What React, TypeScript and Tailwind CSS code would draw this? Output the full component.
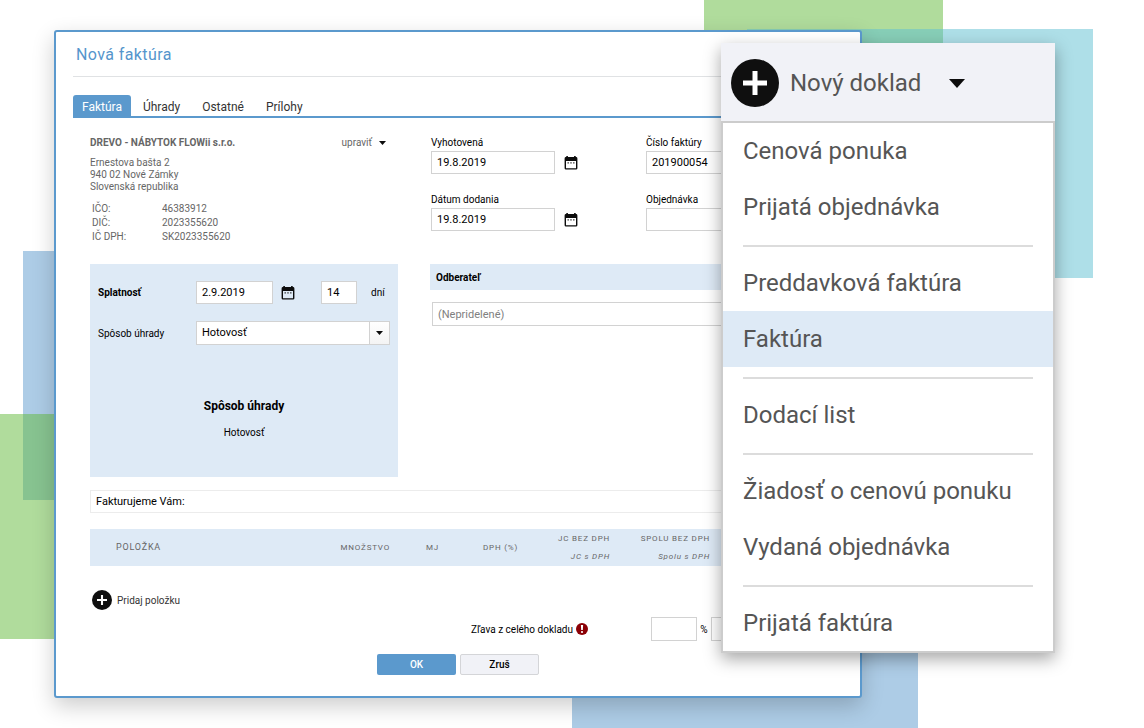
import { useState } from "react";

const tabs = ["Faktúra", "Úhrady", "Ostatné", "Prílohy"];

const sellerIds = [
  { label: "IČO:", value: "46383912" },
  { label: "DIČ:", value: "2023355620" },
  { label: "IČ DPH:", value: "SK2023355620" },
];

const menuGroups = [
  ["Cenová ponuka", "Prijatá objednávka"],
  ["Preddavková faktúra", "Faktúra"],
  ["Dodací list"],
  ["Žiadosť o cenovú ponuku", "Vydaná objednávka"],
  ["Prijatá faktúra"],
];

const inputClass = "block border border-[#d2d2d2] bg-white px-[5px] text-[11px] text-black outline-none";

function PlusIcon({ className }: { className: string }) {
  return (
    <svg viewBox="0 0 48 48" className={className} aria-hidden="true">
      <circle cx="24" cy="24" r="24" fill="#0f0f0f" />
      <path d="M24 12v24M12 24h24" stroke="#fff" strokeWidth="5" />
    </svg>
  );
}

function CalendarIcon() {
  return (
    <svg viewBox="0 0 14 14" className="h-3.5 w-3.5" aria-hidden="true">
      <path
        d="M2 1h10a1.400 1.400 0 0 1 1.400 1.400v9.800a1.400 1.400 0 0 1-1.400 1.400H2a1.400 1.400 0 0 1-1.400-1.400V2.400A1.400 1.400 0 0 1 2 1zM2 5v7.200h10V5z"
        fill="#0c0c0c"
        fillRule="evenodd"
      />
      <path d="M2.300 0h1.600v2H2.300zM10.100 0h1.600v2h-1.600z" fill="#0c0c0c" />
      <path d="M3.500 6.300h1.400v1.200H3.500zM6.300 6.300h1.400v1.200H6.300zM9.100 6.300h1.400v1.200H9.100z" fill="#333" />
    </svg>
  );
}

function Caret({ className }: { className: string }) {
  return (
    <svg viewBox="0 0 16 9" className={className} aria-hidden="true">
      <path d="M0 0h16L8 9z" fill="#0c0c0c" />
    </svg>
  );
}

function DateField({ id, label }: { id: string; label: string }) {
  return (
    <div>
      <label htmlFor={id} className="block text-[10px] leading-4">{label}</label>
      <div className="flex items-center gap-[9px]">
        <input id={id} type="text" defaultValue="19.8.2019" className={`${inputClass} h-[23px] w-[124px]`} />
        <button type="button" aria-label={`${label} – kalendár`}><CalendarIcon /></button>
      </div>
    </div>
  );
}

function Backdrop() {
  return (
    <div className="absolute inset-0 overflow-hidden" aria-hidden="true">
      <div className="absolute top-0 right-[201px] h-[140px] w-[239px] bg-[#61b939]/50" />
      <div className="absolute top-[29px] right-[51px] h-[249px] w-[346px] bg-[#5dc0d1]/50" />
      <div className="absolute top-[251px] left-[23px] h-[249px] w-[346px] bg-[#5b99cd]/50" />
      <div className="absolute top-[414px] left-0 h-[225px] w-[239px] bg-[#61b939]/50" />
      <div className="absolute top-[479px] right-[226px] h-[249px] w-[346px] bg-[#5b99cd]/50" />
    </div>
  );
}

function Seller() {
  return (
    <section className="text-[10px] text-[#666]">
      <div className="flex justify-between pr-3">
        <h2 className="leading-4 font-bold">DREVO - NÁBYTOK FLOWii s.r.o.</h2>
        <button type="button" className="flex items-center gap-[7px] leading-4">
          upraviť
          <Caret className="h-1 w-[7px]" />
        </button>
      </div>
      <address className="mt-1.5 leading-3 not-italic">
        Ernestova bašta 2<br />
        940 02 Nové Zámky<br />
        Slovenská republika
      </address>
      <dl className="mt-[9px] ml-0.5">
        {sellerIds.map((row) => (
          <div key={row.label} className="flex leading-3.5">
            <dt className="w-[70px]">{row.label}</dt>
            <dd>{row.value}</dd>
          </div>
        ))}
      </dl>
    </section>
  );
}

function Payment() {
  return (
    <section className="h-[213px] bg-[#deeaf6] px-2 pt-[17px] text-[10px]">
      <div className="flex items-center">
        <label htmlFor="due" className="w-[98px] font-bold">Splatnosť</label>
        <input id="due" type="text" defaultValue="2.9.2019" className={`${inputClass} h-[23px] w-[77px]`} />
        <button type="button" aria-label="Splatnosť – kalendár" className="ml-2"><CalendarIcon /></button>
        <input id="days" type="text" defaultValue="14" className={`${inputClass} ml-[26px] h-[23px] w-9`} />
        <label htmlFor="days" className="ml-3.5">dní</label>
      </div>
      <div className="mt-[17px] flex items-center">
        <label htmlFor="method" className="w-[98px]">Spôsob úhrady</label>
        <div className="relative">
          <select id="method" className={`${inputClass} h-6 w-[194px] appearance-none`}>
            <option>Hotovosť</option>
          </select>
          <span className="pointer-events-none absolute inset-y-0 right-0 flex w-[21px] items-center justify-center border border-[#d2d2d2] bg-linear-to-b from-white to-[#f4f4f4]">
            <Caret className="h-1 w-[7px]" />
          </span>
        </div>
      </div>
      <div className="mt-[53px] text-center">
        <h3 className="text-xs leading-4 font-bold">Spôsob úhrady</h3>
        <p className="mt-[11px] leading-4">Hotovosť</p>
      </div>
    </section>
  );
}

function InvoiceDialog() {
  const [active, setActive] = useState("Faktúra");

  return (
    <main className="relative mr-[282px] ml-[54px] rounded-[3px] border-2 border-[#5b99cd] bg-white px-[17px] pt-[11px] pb-[21px] text-black shadow-[0_8px_22px_rgba(0,0,0,0.2)]">
      <h1 className="border-b border-[#e0e2e4] pb-[9px] pl-[3px] text-base leading-6 tracking-wide text-[#5595cc]">Nová faktúra</h1>

      <div role="tablist" className="mt-[18px] flex border-b-2 border-[#5b99cd] text-xs">
        {tabs.map((tab) => (
          <button
            key={tab}
            type="button"
            role="tab"
            aria-selected={tab === active}
            onClick={() => setActive(tab)}
            className={tab === active
              ? "mr-0.5 h-[21px] rounded-t-[3px] bg-[#5b99cd] px-[9px] pt-0.5 text-white"
              : "mr-0.5 h-[21px] px-2.5 pt-0.5 text-[#333]"}
          >
            {tab}
          </button>
        ))}
      </div>

      <div className="px-[17px] pt-[17px]">
        <div className="grid grid-cols-[308px_1fr] gap-x-8 gap-y-5">
          <Seller />
          <div className="grid grid-cols-[215px_1fr] content-start gap-y-[18px] pl-px">
            <DateField id="issued" label="Vyhotovená" />
            <div>
              <label htmlFor="number" className="block text-[10px] leading-4">Číslo faktúry</label>
              <input id="number" type="text" defaultValue="201900054" className={`${inputClass} h-[23px] w-full`} />
            </div>
            <DateField id="delivered" label="Dátum dodania" />
            <div>
              <label htmlFor="order" className="block text-[10px] leading-4">Objednávka</label>
              <input id="order" type="text" className={`${inputClass} h-[23px] w-full`} />
            </div>
          </div>

          <Payment />
          <section>
            <h2 className="bg-[#deeaf6] px-1.5 pt-px text-[10px] leading-[25px] font-bold">
              <label htmlFor="customer">Odberateľ</label>
            </h2>
            <div className="mt-3 pl-0.5">
              <input
                id="customer"
                type="text"
                placeholder="(Nepridelené)"
                className={`${inputClass} h-6 w-full placeholder:text-[#808080]`}
              />
            </div>
          </section>
        </div>

        <input
          type="text"
          aria-label="Úvodný text"
          defaultValue="Fakturujeme Vám:"
          className="mt-[13px] block h-[23px] w-full border border-[#ececec] px-[5px] text-[11px] outline-none"
        />

        <table className="mt-4 w-full table-fixed bg-[#deeaf6] text-[8px] tracking-widest text-[#666]">
          <thead>
            <tr className="h-[37px] text-right *:font-normal">
              <th className="pl-[26px] text-left text-[9px]">POLOŽKA</th>
              <th className="w-[100px]">MNOŽSTVO</th>
              <th className="w-[49px]">MJ</th>
              <th className="w-[79px]">DPH (%)</th>
              <th className="w-[92px]">
                <span className="block leading-[18px]">JC BEZ DPH</span>
                <em className="block leading-[18px]">JC s DPH</em>
              </th>
              <th className="w-[100px]">
                <span className="block leading-[18px]">SPOLU BEZ DPH</span>
                <em className="block leading-[18px]">Spolu s DPH</em>
              </th>
              <td className="w-[116px]" />
            </tr>
          </thead>
        </table>

        <button type="button" className="mt-6 ml-0.5 flex items-center gap-[5px] text-[10px] text-[#333]">
          <PlusIcon className="h-5 w-5" />
          Pridaj položku
        </button>

        <div className="mt-[7px] flex items-center justify-end text-[10px]">
          <label htmlFor="discount">Zľava z celého dokladu</label>
          <svg viewBox="0 0 12 12" className="mr-[63px] ml-[3px] h-3 w-3" aria-hidden="true">
            <circle cx="6" cy="6" r="6" fill="#8b0006" />
            <path d="M4.900 2h2.200l-.3 5H5.200z" fill="#fff" />
            <circle cx="6" cy="9" r="1.100" fill="#fff" />
          </svg>
          <input id="discount" type="text" className={`${inputClass} h-6 w-[46px]`} />
          <span className="w-3.5 text-center">%</span>
          <input type="text" aria-label="Zľava v eurách" className={`${inputClass} h-6 w-[115px]`} />
        </div>
      </div>

      <div className="mt-[13px] flex justify-center gap-1 text-[10px] font-medium">
        <button type="button" className="h-[21px] w-[79px] rounded-xs bg-[#5b99cd] text-white">OK</button>
        <button type="button" className="h-[21px] w-[79px] rounded-xs border border-[#d4d5d8] bg-[#f1f2f7]">Zruš</button>
      </div>
    </main>
  );
}

function NewDocumentMenu() {
  return (
    <nav className="absolute top-[43px] right-[89px] w-[334px] text-2xl text-[#555] shadow-[0_6px_16px_rgba(0,0,0,0.35)]">
      <button type="button" aria-expanded="true" className="flex h-[78px] w-full items-center bg-[#f1f2f7] pt-0.5 pl-2.5">
        <PlusIcon className="h-12 w-12" />
        <span className="ml-[11px]">Nový doklad</span>
        <Caret className="ml-7 h-[9px] w-4" />
      </button>
      <div className="border-2 border-[#ccc] bg-white">
        {menuGroups.map((group, i) => (
          <ul key={i}>
            {i > 0 && <li role="separator" className="mx-5 mt-2.5 mb-2 h-0.5 bg-[#dcdcdc]" />}
            {group.map((item) => (
              <li key={item}>
                <a
                  href="#"
                  className={`block h-14 px-5 leading-14 ${item === "Faktúra" ? "bg-[#deeaf6]" : ""}`}
                >
                  {item}
                </a>
              </li>
            ))}
          </ul>
        ))}
      </div>
    </nav>
  );
}

export default function App() {
  return (
    <div className="relative min-h-screen overflow-hidden bg-white pt-[30px] pb-[30px] font-['Roboto','Liberation_Sans',sans-serif]">
      <Backdrop />
      <InvoiceDialog />
      <NewDocumentMenu />
    </div>
  );
}
